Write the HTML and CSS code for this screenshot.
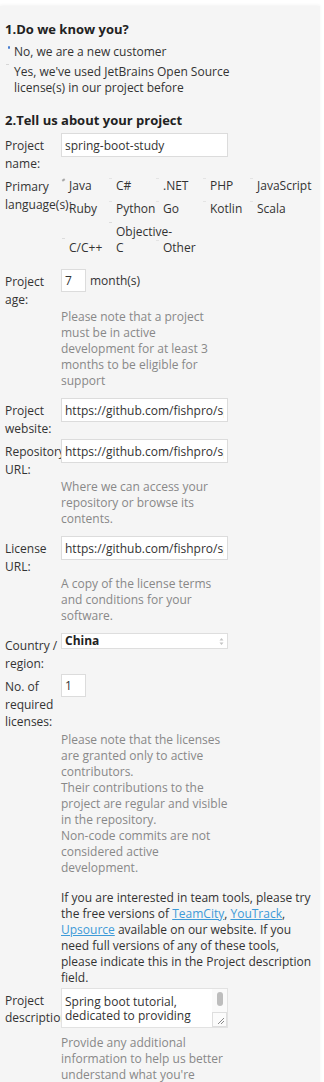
FILE: index.html
```html
<!DOCTYPE html>
<html lang="en">
<head>
<meta charset="utf-8">
<title>Open Source License Request</title>
<link rel="stylesheet" href="styles.css">
</head>
<body>
<main class="panel">
  <h2 class="section">1.Do we know you?</h2>
  <div class="radios">
    <label class="radio-opt"><span class="radio-mark checked"></span><span class="radio-text">No, we are a new customer</span></label>
    <label class="radio-opt"><span class="radio-mark"></span><span class="radio-text">Yes, we've used JetBrains Open Source license(s) in our project before</span></label>
  </div>

  <h2 class="section section-2">2.Tell us about your project</h2>

  <div class="field">
    <label class="lbl">Project name:</label>
    <div class="ctl"><input class="txt" type="text" value="spring-boot-study"></div>
  </div>

  <div class="field field-lang">
    <label class="lbl">Primary language(s):</label>
    <div class="langs">
      <label class="lang"><span class="cb on"></span><span class="lang-name">Java</span></label>
      <label class="lang"><span class="cb"></span><span class="lang-name">C#</span></label>
      <label class="lang"><span class="cb"></span><span class="lang-name">.NET</span></label>
      <label class="lang"><span class="cb"></span><span class="lang-name">PHP</span></label>
      <label class="lang"><span class="cb"></span><span class="lang-name">JavaScript</span></label>
      <label class="lang"><span class="cb"></span><span class="lang-name">Ruby</span></label>
      <label class="lang"><span class="cb"></span><span class="lang-name">Python</span></label>
      <label class="lang"><span class="cb"></span><span class="lang-name">Go</span></label>
      <label class="lang"><span class="cb"></span><span class="lang-name">Kotlin</span></label>
      <label class="lang"><span class="cb"></span><span class="lang-name">Scala</span></label>
      <label class="lang"><span class="cb faint"></span><span class="lang-name">C/C++</span></label>
      <label class="lang"><span class="cb faint"></span><span class="lang-name">Objective-C</span></label>
      <label class="lang"><span class="cb"></span><span class="lang-name">Other</span></label>
    </div>
  </div>

  <div class="field">
    <label class="lbl">Project age:</label>
    <div class="ctl ctl-row"><input class="txt num" type="text" value="7"><span>month(s)</span></div>
    <p class="help">Please note that a project must be in active development for at least 3 months to be eligible for support</p>
  </div>

  <div class="field">
    <label class="lbl">Project website:</label>
    <div class="ctl"><input class="txt" type="text" value="https://github.com/fishpro/spring-boot-study"></div>
  </div>

  <div class="field">
    <label class="lbl">Repository URL:</label>
    <div class="ctl"><input class="txt" type="text" value="https://github.com/fishpro/spring-boot-study"></div>
    <p class="help">Where we can access your repository or browse its contents.</p>
  </div>

  <div class="field">
    <label class="lbl">License URL:</label>
    <div class="ctl"><input class="txt" type="text" value="https://github.com/fishpro/spring-boot-study/blob/master/LICENSE"></div>
    <p class="help">A copy of the license terms and conditions for your software.</p>
  </div>

  <div class="field">
    <label class="lbl">Country / region:</label>
    <div class="ctl">
      <div class="select">
        <select class="sel"><option>China</option></select>
        <svg class="sel-arrow" width="5" height="9" viewBox="0 0 5 9"><path d="M2.5 1 L4.5 3.5 H0.5 Z M2.5 8 L4.5 5.5 H0.5 Z" fill="#c4c4c4"/></svg>
      </div>
    </div>
  </div>

  <div class="field">
    <label class="lbl">No. of required licenses:</label>
    <div class="ctl"><input class="txt num" type="text" value="1"></div>
    <p class="help">Please note that the licenses are granted only to active contributors.<br>Their contributions to the project are regular and visible in the repository.<br>Non-code commits are not considered active development.</p>
    <p class="info">If you are interested in team tools, please try the free versions of <a href="#">TeamCity</a>, <a href="#">YouTrack</a>, <a href="#">Upsource</a> available on our website. If you need full versions of any of these tools, please indicate this in the Project description field.</p>
  </div>

  <div class="field">
    <label class="lbl">Project description:</label>
    <div class="ctl">
      <div class="ta">
        <textarea class="ta-text" readonly>Spring boot tutorial, dedicated to providing</textarea>
        <div class="ta-bar">
          <span class="ta-thumb"></span>
          <svg class="ta-grip" width="15" height="15" viewBox="0 0 15 15"><rect x="0.5" y="0.5" width="14" height="14" fill="#fbfbfb" stroke="#dedede"/><path d="M12 6 L6 12 M12 9 L9 12" stroke="#8a8a8a" stroke-width="1"/></svg>
        </div>
      </div>
    </div>
    <p class="help help-desc">Provide any additional information to help us better understand what you're working on.</p>
  </div>
</main>
</body>
</html>
```

FILE: styles.css
```css
html, body {
  margin: 0;
  padding: 0;
}

body {
  background: #ffffff;
  font-family: "Open Sans", "Liberation Sans", sans-serif;
  font-size: 12px;
  color: #333333;
}

.panel {
  display: block;
  margin-top: 6px;
  width: 320px;
  min-height: 1076px;
  box-sizing: border-box;
  padding: 14px 0 0 5px;
  background: #f5f5f5;
  box-shadow: 0 -1px 3px rgba(0, 0, 0, 0.05);
}

.section {
  margin: 0;
  font-size: 13px;
  font-weight: 700;
  line-height: 18px;
  color: #222222;
}

.section-2 {
  margin-top: 15px;
  margin-bottom: 4px;
}

.radios {
  margin-top: 6px;
  display: flex;
  flex-direction: column;
  gap: 4px;
}

.radio-opt {
  display: flex;
  line-height: 16px;
}

.radio-mark {
  flex: none;
  width: 9px;
  position: relative;
}

.radio-mark::before {
  content: "";
  position: absolute;
  left: 1px;
  top: 0;
  width: 3px;
  height: 1px;
  background: #d6d6d6;
}

.radio-mark.checked::before {
  left: 3px;
  top: 2px;
  width: 2px;
  height: 3px;
  background: #4a7fd0;
  border-radius: 1px;
}

.radio-text {
  max-width: 232px;
}

.field {
  display: grid;
  grid-template-columns: 56px 1fr;
  row-gap: 1px;
  margin-bottom: 2px;
}

.lbl {
  grid-column: 1;
  padding-top: 4px;
  line-height: 17.5px;
  color: #333333;
  min-width: 0;
}

.ctl {
  grid-column: 2;
  min-width: 0;
}

.ctl-row {
  display: flex;
  align-items: center;
  gap: 4px;
  align-self: start;
  height: 23px;
}

.txt {
  display: block;
  box-sizing: border-box;
  width: 167px;
  height: 24px;
  margin: 0;
  padding: 0 3px;
  border: 1px solid #dcdcdc;
  background: #ffffff;
  font-family: "Open Sans", "Liberation Sans", sans-serif;
  font-size: 12px;
  color: #333333;
  outline: none;
}

.txt.num {
  width: 25px;
  height: 23px;
}

.help {
  grid-column: 2;
  width: 167px;
  margin: 0 0 7px;
  line-height: 16px;
  color: #888888;
}

.help-desc {
  margin-top: 6px;
}

.info {
  grid-column: 2;
  width: 255px;
  margin: 6px 0 0;
  line-height: 16px;
  color: #333333;
}

.info a {
  display: inline-block;
  line-height: 16px;
  color: #3d9ad8;
  text-decoration: underline;
}

/* languages */
.field-lang {
  margin-bottom: 13px;
}

.langs {
  grid-column: 2;
  padding-top: 4px;
  display: grid;
  grid-template-columns: repeat(5, 47px);
  row-gap: 7px;
  align-items: end;
  line-height: 16px;
}

.lang {
  display: flex;
  align-items: flex-start;
}

.cb {
  flex: none;
  width: 8px;
  height: 16px;
  position: relative;
}

.cb::before {
  content: "";
  position: absolute;
  left: 1px;
  top: 0;
  width: 3px;
  height: 1px;
  background: #e4e4e4;
}

.cb.on::before {
  left: 1px;
  top: 1px;
  width: 3px;
  height: 2px;
  background: #a8a8a8;
  transform: rotate(-35deg);
}

.cb.faint::before {
  top: -2px;
  background: #dcdcdc;
}

.lang-name {
  min-width: 0;
  width: 39px;
  white-space: normal;
}

/* select */
.select {
  display: flex;
  align-items: center;
  box-sizing: border-box;
  width: 167px;
  height: 16px;
  border: 1px solid #dedede;
  background: #ffffff;
}

.sel {
  flex: 1;
  min-width: 0;
  height: 14px;
  margin: 0;
  padding: 0 3px;
  border: 0;
  background: transparent;
  -webkit-appearance: none;
  appearance: none;
  font-family: "Open Sans", "Liberation Sans", sans-serif;
  font-size: 12px;
  font-weight: 700;
  line-height: 14px;
  color: #222222;
  outline: none;
}

.sel-arrow {
  flex: none;
  margin-right: 3px;
}

/* textarea */
.ta {
  display: flex;
  box-sizing: border-box;
  width: 167px;
  height: 40px;
  border: 1px solid #e2e2e2;
  background: #ffffff;
}

.ta-text {
  flex: 1;
  min-width: 0;
  margin: 0;
  padding: 6px 3px 0;
  border: 0;
  resize: none;
  overflow: hidden;
  background: #ffffff;
  font-family: "Open Sans", "Liberation Sans", sans-serif;
  font-size: 12px;
  line-height: 14px;
  color: #333333;
  outline: none;
}

.ta-bar {
  flex: none;
  width: 15px;
  display: flex;
  flex-direction: column;
  align-items: center;
  justify-content: space-between;
  background: #fafafa;
}

.ta-thumb {
  display: block;
  width: 6px;
  height: 14px;
  margin-top: 3px;
  border-radius: 3px;
  background: #bdbdbd;
}

.ta-grip {
  display: block;
}
```
